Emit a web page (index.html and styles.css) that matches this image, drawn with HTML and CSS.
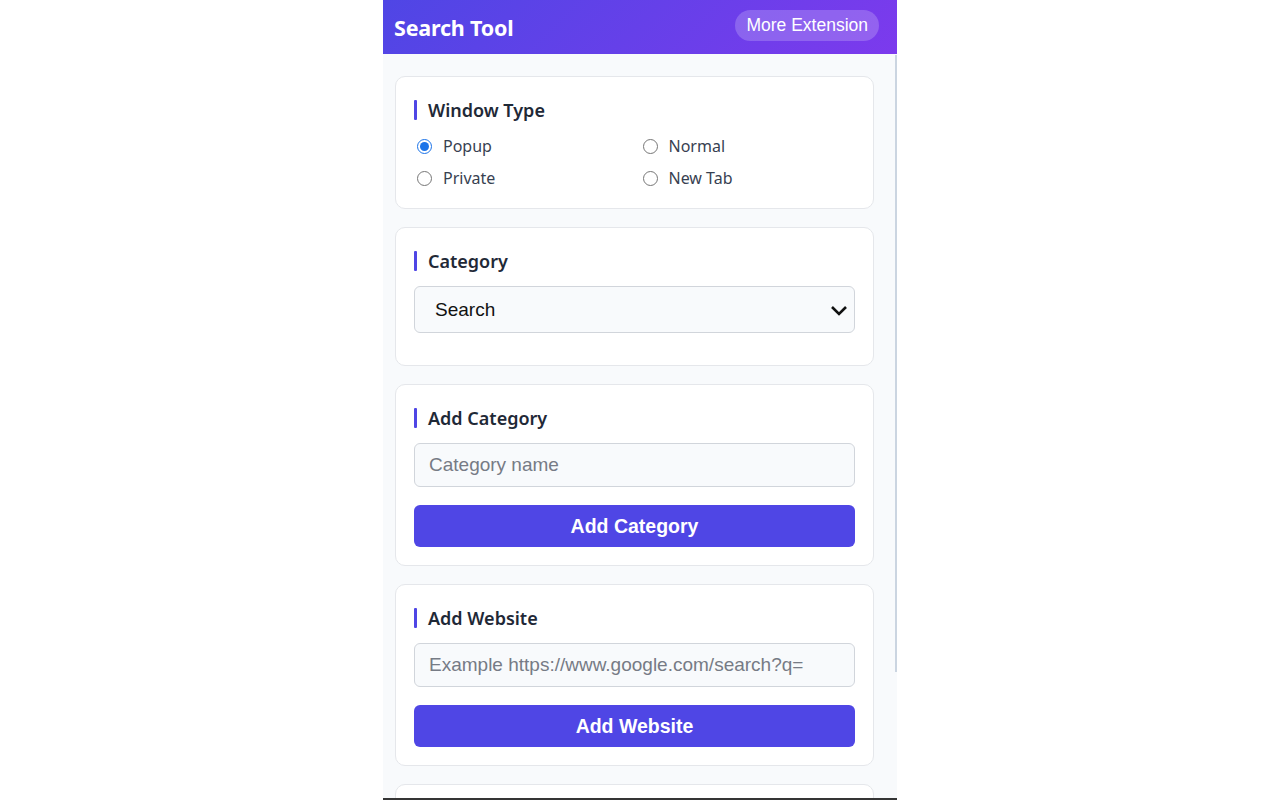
FILE: index.html
```html
<!DOCTYPE html>
<html lang="en">
<head>
    <meta charset="UTF-8">
    <title>Search Tool</title>
    <link rel="stylesheet" href="styles.css">
</head>
<body>

<div class="panel">
    <div class="header">
        <h1>Search Tool</h1>
        <button class="more-btn">More Extension</button>
    </div>

    <div class="content">
        <div class="card">
            <h3>Window Type</h3>
            <div class="radio-grid">
                <label><input type="radio" name="wtype" checked> Popup</label>
                <label><input type="radio" name="wtype"> Normal</label>
                <label><input type="radio" name="wtype"> Private</label>
                <label><input type="radio" name="wtype"> New Tab</label>
            </div>
        </div>

        <div class="card">
            <h3>Category</h3>
            <select class="category-select">
                <option>Search</option>
            </select>
        </div>

        <div class="card">
            <h3>Add Category</h3>
            <input class="field" placeholder="Category name">
            <button class="primary">Add Category</button>
        </div>

        <div class="card">
            <h3>Add Website</h3>
            <input class="field" placeholder="Example https://www.google.com/search?q=">
            <button class="primary">Add Website</button>
        </div>

        <div class="card card-empty"></div>
    </div>

    <div class="scroll-thumb"></div>
</div>

</body>
</html>
```

FILE: styles.css
```css
body {
    margin: 0;
    background: #fff;
    font-family: "Noto Sans", "Open Sans", sans-serif;
}

.panel {
    position: relative;
    width: 514px;
    height: 800px;
    margin: 0 auto;
    background: #f8fafc;
    overflow: hidden;
    box-sizing: border-box;
    border-bottom: 2px solid #353535;
}

.header {
    height: 54px;
    display: flex;
    align-items: center;
    justify-content: space-between;
    padding: 0 18px 0 11px;
    background: linear-gradient(135deg, #4f46e5, #7c3aed);
}

.header h1 {
    margin: 0;
    color: #fff;
    font-size: 21.5px;
    font-weight: 700;
    letter-spacing: -0.2px;
}

.more-btn {
    height: 31px;
    padding: 0 11px;
    border: none;
    border-radius: 16px;
    background: rgba(255, 255, 255, 0.2);
    color: #fff;
    font-family: "Liberation Sans", Arial, sans-serif;
    font-size: 17.5px;
    margin-top: -4px;
}

.content {
    display: flex;
    flex-direction: column;
    gap: 18px;
    padding: 22px 23px 0 12px;
}

.card {
    background: #fff;
    border: 1px solid #e5e7eb;
    border-radius: 10px;
    padding: 20px 18px 18px 18px;
    display: flex;
    flex-direction: column;
}

.card-empty {
    height: 120px;
}

.card h3 {
    display: flex;
    align-items: center;
    gap: 11px;
    margin: 0 0 12px;
    font-size: 18px;
    line-height: 26px;
    font-weight: 600;
    color: #1f2937;
}

.card h3::before {
    content: "";
    width: 3px;
    height: 20px;
    background: #4f46e5;
    border-radius: 1px;
}

.radio-grid {
    display: grid;
    grid-template-columns: 1fr 1fr;
    column-gap: 10px;
    row-gap: 10px;
    padding-bottom: 1px;
}

.radio-grid label {
    display: flex;
    align-items: center;
    height: 22px;
    font-size: 16px;
    color: #374151;
}

.radio-grid input {
    width: 15px;
    height: 15px;
    margin: 0 11px 0 3px;
    accent-color: #1a73e8;
}

.category-select {
    appearance: none;
    height: 47px;
    margin-bottom: 14px;
    padding: 0 20px;
    border: 1px solid #d1d5db;
    border-radius: 6px;
    background: #f8fafc url("data:image/svg+xml,%3Csvg xmlns='http://www.w3.org/2000/svg' width='18' height='12' viewBox='0 0 18 12'%3E%3Cpath d='M2 3l7 7 7-7' fill='none' stroke='%23111' stroke-width='2.6'/%3E%3C/svg%3E") no-repeat right 6px center;
    font-family: "Liberation Sans", Arial, sans-serif;
    font-size: 19px;
    color: #111;
}

.field {
    height: 44px;
    padding: 0 14px;
    box-sizing: border-box;
    border: 1px solid #d1d5db;
    border-radius: 6px;
    background: #f8fafc;
    font-family: "Liberation Sans", Arial, sans-serif;
    font-size: 19px;
    margin-bottom: 18px;
}

.field::placeholder {
    color: #767b85;
}

.primary {
    height: 42px;
    border: none;
    border-radius: 6px;
    background: #4f46e5;
    color: #fff;
    font-family: "Liberation Sans", Arial, sans-serif;
    font-size: 19.5px;
    font-weight: 700;
}

.scroll-thumb {
    position: absolute;
    top: 55px;
    right: 0;
    width: 2px;
    height: 617px;
    background: #cbd5e1;
}
```
